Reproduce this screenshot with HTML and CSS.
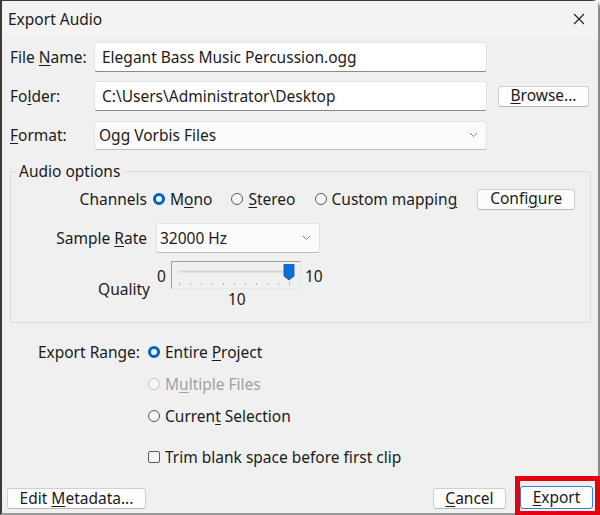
FILE: index.html
```html
<!DOCTYPE html>
<html>
<head>
<meta charset="utf-8">
<link rel="stylesheet" href="styles.css">
</head>
<body>
<div class="window">
  <div class="titlebar">
    <span class="title">Export Audio</span>
    <svg class="close" width="12" height="12" viewBox="0 0 12 12"><path d="M1 1L11 11M11 1L1 11" stroke="#222" stroke-width="1.2"/></svg>
  </div>

  <div class="form">
    <div class="row r1">
      <label class="lbl">File <u>N</u>ame:</label>
      <div class="input">Elegant Bass Music Percussion.ogg</div>
    </div>
    <div class="row r2">
      <label class="lbl">Fo<u>l</u>der:</label>
      <div class="input">C:\Users\Administrator\Desktop</div>
      <button class="btn browse"><span><u>B</u>rowse...</span></button>
    </div>
    <div class="row r3">
      <label class="lbl"><u>F</u>ormat:</label>
      <div class="select fmt"><span>Ogg Vorbis Files</span><svg class="chev" width="9" height="6" viewBox="0 0 9 6"><path d="M1 1L4.5 4.5L8 1" stroke="#888" fill="none" stroke-width="1"/></svg></div>
    </div>
  </div>

  <fieldset class="group">
    <legend>Audio options</legend>
    <div class="grow ch">
      <span class="glbl">Channels</span>
      <span class="radio on"></span><span class="rtxt">M<u>o</u>no</span>
      <span class="radio sp"></span><span class="rtxt"><u>S</u>tereo</span>
      <span class="radio sp"></span><span class="rtxt">Custom mappin<u>g</u></span>
      <button class="btn conf"><span>Confi<u>g</u>ure</span></button>
    </div>
    <div class="grow sr">
      <span class="glbl">Sample <u>R</u>ate</span>
      <div class="select rate"><span>32000 Hz</span><svg class="chev" width="9" height="6" viewBox="0 0 9 6"><path d="M1 1L4.5 4.5L8 1" stroke="#888" fill="none" stroke-width="1"/></svg></div>
    </div>
    <div class="grow q">
      <span class="glbl qlbl">Quality</span>
      <div class="slidercol">
        <div class="sliderrow">
          <span class="smin">0</span>
          <div class="slider">
            <svg width="128" height="26" viewBox="0 0 128 26">
              <line x1="7" y1="9.5" x2="120" y2="9.5" stroke="#d6d6d6" stroke-width="2"/>
              <g stroke="#b8b8b8" stroke-width="1">
                <line x1="7.5" y1="20" x2="7.5" y2="23"/>
                <line x1="18.5" y1="21" x2="18.5" y2="23"/>
                <line x1="29.5" y1="21" x2="29.5" y2="23"/>
                <line x1="40.5" y1="21" x2="40.5" y2="23"/>
                <line x1="51.5" y1="21" x2="51.5" y2="23"/>
                <line x1="62.5" y1="21" x2="62.5" y2="23"/>
                <line x1="73.5" y1="21" x2="73.5" y2="23"/>
                <line x1="84.5" y1="21" x2="84.5" y2="23"/>
                <line x1="95.5" y1="21" x2="95.5" y2="23"/>
                <line x1="106.5" y1="21" x2="106.5" y2="23"/>
                <line x1="117.5" y1="20" x2="117.5" y2="23"/>
              </g>
              <path d="M112 2.5H122V14L117 18L112 14Z" fill="#0a6fd6" stroke="#0056b3" stroke-width="0.8"/>
            </svg>
          </div>
          <span class="smax">10</span>
        </div>
        <div class="sval">10</div>
      </div>
    </div>
  </fieldset>

  <div class="range">
    <div class="rrow">
      <span class="rlbl">Export Range:</span>
      <span class="radio on"></span><span class="rtxt">Entire <u>P</u>roject</span>
    </div>
    <div class="rrow">
      <span class="rlbl"></span>
      <span class="radio dis"></span><span class="rtxt distxt">M<u>u</u>ltiple Files</span>
    </div>
    <div class="rrow">
      <span class="rlbl"></span>
      <span class="radio"></span><span class="rtxt">Curren<u>t</u> Selection</span>
    </div>
    <div class="rrow trim">
      <span class="rlbl"></span>
      <span class="check"></span><span class="rtxt">Trim blank space before first clip</span>
    </div>
  </div>

  <div class="footer">
    <button class="btn meta"><span>Edit <u>M</u>etadata...</span></button>
    <div class="spacer"></div>
    <button class="btn cancel"><span><u>C</u>ancel</span></button>
    <div class="hl">
      <button class="btn export"><span><u>E</u>xport</span></button>
    </div>
  </div>
</div>
</body>
</html>
```

FILE: styles.css
```css
* { box-sizing: border-box; }
html, body { margin: 0; padding: 0; background: #f0f0f0; }
body {
  font-family: "Noto Sans", "Open Sans", sans-serif;
  font-size: 15.5px;
  color: #1b1b1b;
  width: 600px;
  height: 515px;
  overflow: hidden;
}
u { text-decoration: underline; text-underline-offset: 2px; text-decoration-thickness: 1px; }
.window {
  position: relative;
  width: 600px;
  height: 515px;
  background: #f0f0f0;
  border-left: 2px solid #3a3a3a;
  border-top: 1px solid #3a3a3a;
  border-right: 2px solid #8a8a8a;
  border-top-right-radius: 8px;
  border-bottom: 2px solid #9a9a9a;
}
.titlebar {
  height: 37px;
  display: flex;
  align-items: center;
  padding: 0 12px 2px 6px;
  justify-content: space-between;
  background: #f3f3f3;
}
.title { font-size: 15.5px; }
.close { margin-right: 1px; }

.form { padding-top: 4px; }
.row { display: flex; align-items: center; height: 30px; margin-bottom: 9px; }
.r3 { margin-bottom: 0; }
.lbl { width: 92px; padding-left: 8px; flex: none; }
.input {
  width: 393px; height: 30px;
  background: #fff;
  border: 1px solid #e4e4e4;
  border-bottom: 1px solid #8a8a8a;
  border-radius: 3px;
  padding: 0 0 0 7px;
  display: flex; align-items: center;
}
.btn {
  font-family: inherit; font-size: 15.5px; color: #1b1b1b;
  background: #fdfdfd;
  border: 1px solid #d0d0d0;
  border-bottom-color: #b8b8b8;
  border-radius: 3px;
  height: 21px;
  padding: 0;
  display: flex; align-items: center; justify-content: center;
  line-height: 1;
}
.browse { width: 91px; margin-left: 11px; }
.select {
  height: 30px;
  background: #fbfbfb;
  border: 1px solid #e2e2e2;
  border-bottom-color: #bdbdbd;
  border-radius: 3px;
  display: flex; align-items: center; justify-content: space-between;
  padding: 0 8px 0 4px;
}
.fmt { width: 393px; height: 29px; }

.group {
  margin: 12px 0 0 8px;
  width: 581px;
  height: 161px;
  border: 1px solid #dcdcdc;
  border-radius: 2px;
  padding: 0;
  position: relative;
}
.group legend {
  margin-left: 5px;
  padding: 0 3px;
  font-size: 15.5px;
  line-height: 18px;
}
.grow { display: flex; align-items: center; }
.glbl { width: 136px; text-align: right; flex: none; }
.ch { height: 22px; margin-top: 8px; }
.radio {
  width: 12px; height: 12px; border-radius: 50%;
  border: 1px solid #5c5c5c; background: #f7f7f7;
  flex: none; margin-left: 6px; margin-right: 5px;
}
.radio.on { background: #fff; border: 3.5px solid #0063c2; }
.radio.sp { margin-left: 19px; }
.radio.dis { border-color: #c4c4c4; }
.conf { width: 98px; margin-left: 20px; height: 21px; }
.sr { margin-top: 13px; }
.rate { width: 164px; height: 30px; margin-left: 9px; padding-left: 3px; }
.q { margin-top: 8px; align-items: flex-start; }
.qlbl { width: 139px; margin-top: 17px; }
.slidercol { display: flex; flex-direction: column; align-items: center; margin-left: 7px; }
.sliderrow { display: flex; align-items: flex-start; }
.smin { margin-top: 4px; margin-right: 5px; }
.smax { margin-top: 4px; margin-left: 4px; }
.slider {
  width: 130px; height: 28px;
  border: 1px solid #a0a0a0;
  border-right-color: #e8e8e8;
  border-bottom-color: #e8e8e8;
  background: #f0f0f0;
}
.slider svg { display: block; }
.sval { margin-top: 0; margin-right: 6px; line-height: 20px; }

.range { margin-top: 18px; }
.rrow { display: flex; align-items: center; height: 22px; margin-bottom: 10px; }
.rlbl { width: 138px; text-align: right; flex: none; }
.range .radio { margin-left: 8px; margin-right: 5px; }
.distxt { color: #a2a2a2; }
.trim { margin-top: 19px; }
.check {
  width: 12px; height: 12px; border: 1px solid #5c5c5c; border-radius: 2px;
  background: #f7f7f7; margin-left: 8px; margin-right: 5px; flex: none;
}

.footer {
  position: absolute; left: 5px; right: 0; top: 474px;
  display: flex; align-items: flex-end; height: 38px;
}
.spacer { flex: 1; }
.meta { width: 139px; height: 21px; margin-bottom: 4px; }
.cancel { width: 73px; height: 21px; margin-bottom: 4px; margin-right: 9px; }
.hl {
  border: 5px solid #e8000f;
  width: 85px; height: 40px;
  display: flex; align-items: flex-end; justify-content: flex-start;
  margin-bottom: -3px; margin-right: -2px;
}
.export {
  width: 73px; height: 23px;
  border: 1px solid #3a7ed0;
  background: #fdfdfd;
  margin-bottom: 2px;
}
```
